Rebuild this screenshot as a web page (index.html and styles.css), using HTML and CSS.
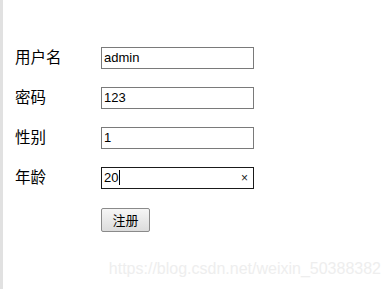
FILE: index.html
```html
<!DOCTYPE html>
<html lang="zh">
<head>
  <meta charset="UTF-8" />
  <title>注册</title>
  <link rel="stylesheet" href="styles.css">
</head>
<body>
<div class="page">
  <form class="reg-form">
    <div class="row">
      <span class="label">用户名</span>
      <div class="field">admin</div>
    </div>
    <div class="row">
      <span class="label">密码</span>
      <div class="field">123</div>
    </div>
    <div class="row">
      <span class="label">性别</span>
      <div class="field">1</div>
    </div>
    <div class="row">
      <span class="label">年龄</span>
      <div class="field active">20<span class="caret"></span><span class="clear">×</span></div>
    </div>
    <div class="row btn-row">
      <span class="label"></span>
      <button type="button" class="submit-btn">注册</button>
    </div>
  </form>
  <div class="watermark">https://blog.csdn.net/weixin_50388382</div>
</div>
</body>
</html>
```

FILE: styles.css
```css
* { box-sizing: border-box; margin: 0; padding: 0; }

body {
  background: #ffffff;
  font-family: "Liberation Sans", Arial, "Noto Sans CJK SC", sans-serif;
  color: #000;
}

.page {
  position: relative;
  height: 289px;
  border-left: 3px solid #e1e1e1;
  padding: 47px 0 0 12px;
}

.reg-form {
  display: flex;
  flex-direction: column;
  gap: 18px;
}

.row {
  display: flex;
  align-items: center;
  height: 22px;
}

.label {
  width: 86px;
  font-family: "Noto Sans CJK SC", sans-serif;
  font-size: 15.5px;
  line-height: 22px;
  margin-top: -4px;
}

.field {
  position: relative;
  width: 153px;
  height: 22px;
  border: 1px solid #7a7a7a;
  padding: 0 2px;
  font-size: 13px;
  line-height: 20px;
  color: #000;
}
.field.active { border-color: #1a1a1a; }

.caret {
  display: inline-block;
  width: 1px;
  height: 15px;
  background: #000;
  vertical-align: -3px;
  margin-left: 1px;
}

.clear {
  position: absolute;
  right: 5px;
  top: 0;
  font-size: 12px;
  line-height: 20px;
  color: #222;
}

.btn-row {
  height: 25px;
}

.submit-btn {
  width: 49px;
  height: 24px;
  border: 1px solid #8a8a8a;
  border-radius: 2px;
  background: linear-gradient(#f6f6f6, #dcdcdc);
  font-family: "Noto Sans CJK SC", sans-serif;
  font-size: 13px;
  color: #000;
}

.watermark {
  position: absolute;
  right: 10px;
  top: 260px;
  font-family: "Liberation Sans", Arial, sans-serif;
  font-size: 16px;
  color: #eeeeee;
}
```
